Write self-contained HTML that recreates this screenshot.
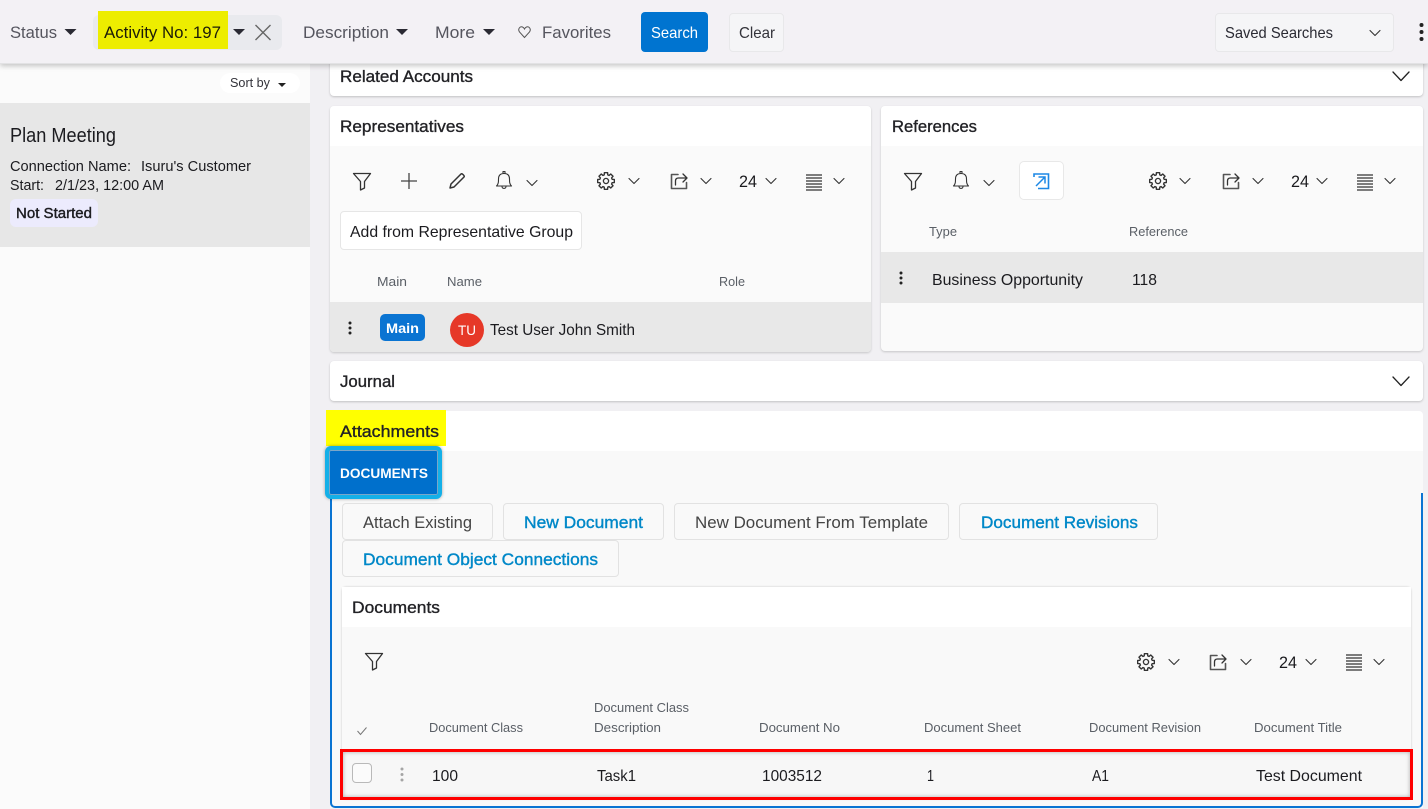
<!DOCTYPE html>
<html lang="en">
<head>
<meta charset="utf-8">
<title>Activity</title>
<style>
html,body{margin:0;padding:0;width:1428px;height:809px;overflow:hidden;background:#f1f0f3;font-family:"Liberation Sans",sans-serif}
.b{position:absolute;box-sizing:border-box}
svg{position:absolute;left:0;top:0}
svg text{font-family:"Liberation Sans",sans-serif;fill:#1b1b1f;font-size:16px}
svg text.hd{font-size:17px;fill:#222226;stroke:#222226;stroke-width:.35px}
svg text.th{font-size:13px;fill:#5a5f66}
svg text.tb{font-size:17px;fill:#55555e}
svg text.ln{fill:#0088c8;stroke:#0088c8;stroke-width:.4px;font-size:17px}
.i{fill:none;stroke:#333;stroke-width:1.3;stroke-linejoin:round;stroke-linecap:round}
</style>
</head>
<body>
<!-- left panel -->
<div class="b" style="left:0;top:64px;width:310px;height:745px;background:#fbfbfb"></div>
<div class="b" style="left:0;top:103px;width:310px;height:144px;background:#e7e7e7"></div>
<div class="b" style="left:220px;top:73px;width:80px;height:20px;background:#fff;border-radius:10px"></div>
<div class="b" style="left:10px;top:199px;width:88px;height:28px;background:#ecebfd;border-radius:6px"></div>

<!-- related accounts -->
<div class="b" style="left:330px;top:56px;width:1093px;height:40px;background:#fff;border-radius:4px;box-shadow:0 1px 2px rgba(0,0,0,.2)"></div>

<!-- representatives -->
<div class="b" style="left:330px;top:106px;width:541px;height:246px;background:#fafafa;border-radius:4px;box-shadow:0 1px 2px rgba(0,0,0,.18);overflow:hidden">
  <div class="b" style="left:0;top:0;width:541px;height:40px;background:#fff"></div>
  <div class="b" style="left:0;top:196px;width:541px;height:50px;background:#e8e8e8"></div>
</div>
<div class="b" style="left:340px;top:211px;width:242px;height:39px;background:#fff;border:1px solid #e6e6e6;border-radius:4px"></div>
<div class="b" style="left:380px;top:314px;width:45px;height:27px;background:#0a74d2;border-radius:5px"></div>
<div class="b" style="left:450px;top:313px;width:34px;height:34px;background:#e63828;border-radius:50%"></div>

<!-- references -->
<div class="b" style="left:881px;top:106px;width:542px;height:245px;background:#fafafa;border-radius:4px;box-shadow:0 1px 2px rgba(0,0,0,.18);overflow:hidden">
  <div class="b" style="left:0;top:0;width:542px;height:40px;background:#fff"></div>
  <div class="b" style="left:0;top:146px;width:542px;height:51px;background:#e8e8e8"></div>
</div>
<div class="b" style="left:1019px;top:161px;width:45px;height:39px;background:#fff;border:1px solid #e8e8e8;border-radius:5px"></div>

<!-- journal -->
<div class="b" style="left:330px;top:361px;width:1093px;height:40px;background:#fff;border-radius:4px;box-shadow:0 1px 2px rgba(0,0,0,.2)"></div>

<!-- attachments -->
<div class="b" style="left:330px;top:411px;width:1093px;height:40px;background:#fff;border-radius:4px 4px 0 0"></div>
<div class="b" style="left:330px;top:451px;width:1093px;height:357px;background:#f9f9f9"></div>
<div class="b" style="left:330px;top:493px;width:1093px;height:315px;border:2px solid #0a74d2;border-top:0;border-radius:0 0 5px 5px"></div>
<div class="b" style="left:326px;top:410px;width:120px;height:36px;background:#ff0"></div>
<div class="b" style="left:325px;top:446px;width:117px;height:53px;background:#0070cc;border:4px solid #14b0e8;border-radius:6px;box-shadow:inset 0 0 0 1px #7aa6c8,0 0 3px rgba(0,0,0,.35)"></div>

<div class="b" style="left:342px;top:503px;width:151px;height:37px;background:#f9f9f9;border:1px solid #e2e2e2;border-radius:4px"></div>
<div class="b" style="left:503px;top:503px;width:161px;height:37px;background:#f9f9f9;border:1px solid #e2e2e2;border-radius:4px"></div>
<div class="b" style="left:674px;top:503px;width:275px;height:37px;background:#f9f9f9;border:1px solid #e2e2e2;border-radius:4px"></div>
<div class="b" style="left:959px;top:503px;width:199px;height:37px;background:#f9f9f9;border:1px solid #e2e2e2;border-radius:4px"></div>
<div class="b" style="left:342px;top:540px;width:277px;height:37px;background:#f9f9f9;border:1px solid #e2e2e2;border-radius:4px"></div>

<!-- documents card -->
<div class="b" style="left:342px;top:587px;width:1069px;height:212px;background:#f9f9f9;border-radius:4px;box-shadow:0 0 2px rgba(0,0,0,.2)">
  <div class="b" style="left:0;top:0;width:1069px;height:40px;background:#fff"></div>
</div>
<div class="b" style="left:340px;top:749px;width:1073px;height:51px;background:#f7f7f7;border:3px solid #f00;box-shadow:inset 0 0 4px rgba(0,0,0,.3)"></div>
<div class="b" style="left:352px;top:763px;width:20px;height:20px;background:#fbfbfb;border:1px solid #b9b9b9;border-radius:4px"></div>

<!-- top bar -->
<div class="b" style="left:0;top:0;width:1428px;height:64px;background:#f3f1f5;border-bottom:1px solid #e2e2e4;box-shadow:0 2px 5px rgba(0,0,0,.22)"></div>
<div class="b" style="left:93px;top:15px;width:189px;height:35px;background:#e9eaee;border-radius:6px"></div>
<div class="b" style="left:98px;top:11px;width:130px;height:38px;background:#eded00"></div>
<div class="b" style="left:641px;top:12px;width:67px;height:40px;background:#0074d0;border-radius:4px"></div>
<div class="b" style="left:729px;top:13px;width:55px;height:39px;background:#f5f5f7;border:1px solid #e8e8ea;border-radius:4px"></div>
<div class="b" style="left:1215px;top:13px;width:179px;height:39px;background:#f5f5f7;border:1px solid #e8e8ea;border-radius:4px"></div>

<svg width="1428" height="809" viewBox="0 0 1428 809">
<defs>
<symbol id="f" overflow="visible"><path class="i" d="M-8.5,-7.5 H8.5 L2.5,0.5 V7 L-1.5,9 V0.5 Z"/></symbol>
<symbol id="bell" overflow="visible"><path class="i" d="M-7.5,6 C-5.500,4 -5.500,2 -5.500,-1 C-5.500,-4.500 -3.500,-6.500 0,-6.500 C3.500,-6.500 5.500,-4.500 5.500,-1 C5.500,2 5.500,4 7.500,6 Z M-1,-6.500 V-8.500 H1 V-6.500 M-2,6.500 C-2,9 2,9 2,6.500" style="stroke-width:1.1"/></symbol>
<symbol id="gear" overflow="visible"><path class="i" transform="scale(1.06)" d="M7.85,-1.53 L7.85,1.53 L5.77,1.65 L5.25,2.91 L6.63,4.47 L4.47,6.63 L2.91,5.25 L1.65,5.77 L1.53,7.85 L-1.53,7.85 L-1.65,5.77 L-2.91,5.25 L-4.47,6.63 L-6.63,4.47 L-5.25,2.91 L-5.77,1.65 L-7.85,1.53 L-7.85,-1.53 L-5.77,-1.65 L-5.25,-2.91 L-6.63,-4.47 L-4.47,-6.63 L-2.91,-5.25 L-1.65,-5.77 L-1.53,-7.85 L1.53,-7.85 L1.65,-5.77 L2.91,-5.25 L4.47,-6.63 L6.63,-4.47 L5.25,-2.91 L5.77,-1.65 Z"/><circle class="i" r="2.6"/></symbol>
<symbol id="exp" overflow="visible"><path class="i" d="M-1,-6.5 H-7.5 V7.5 H7.5 V1.5" style="stroke:#555;stroke-width:1.6"/><path class="i" d="M-3.5,4 V0 Q-3.5,-3 -0.5,-3 H7.5 M4,-7 L8,-3 L4,1"/></symbol>
<symbol id="ln" overflow="visible"><path d="M-8,-7 H8 M-8,-4 H8 M-8,-1 H8 M-8,2 H8 M-8,5 H8 M-8,8 H8" fill="none" stroke="#333" stroke-width="1.2"/></symbol>
<symbol id="c" overflow="visible"><path class="i" d="M-5,-2.5 L0,2.5 L5,-2.5" style="stroke-width:1.1"/></symbol>
<symbol id="t" overflow="visible"><path d="M-6,-3 H6 L0,3 Z" fill="#2a2a33"/></symbol>
<symbol id="k" overflow="visible"><circle cy="-5" r="1.5" fill="#222"/><circle cy="0" r="1.5" fill="#222"/><circle cy="5" r="1.5" fill="#222"/></symbol>
</defs>

<!-- top bar -->
<text class="tb" x="10" y="38" textLength="47" lengthAdjust="spacingAndGlyphs">Status</text>
<use href="#t" x="70.5" y="32"/>
<text x="104" y="38" textLength="117" lengthAdjust="spacingAndGlyphs" style="font-size:17px;fill:#1c1c08">Activity No: 197</text>
<use href="#t" x="239" y="32"/>
<path d="M255.5,25 L270.5,40 M270.5,25 L255.5,40" fill="none" stroke="#666" stroke-width="1.4"/>
<text class="tb" x="303" y="38" textLength="86" lengthAdjust="spacingAndGlyphs">Description</text>
<use href="#t" x="402" y="32"/>
<text class="tb" x="435" y="38" textLength="40" lengthAdjust="spacingAndGlyphs">More</text>
<use href="#t" x="489" y="32"/>
<path d="M524.5,37.5 L519.5,32 C517.5,29 520,26 522.5,27 C523.5,27.4 524,28 524.5,29 C525,28 525.5,27.4 526.5,27 C529,26 531.5,29 529.5,32 Z" fill="none" stroke="#555" stroke-width="1"/>
<text class="tb" x="542" y="38" textLength="69" lengthAdjust="spacingAndGlyphs">Favorites</text>
<text x="651" y="38" textLength="47" lengthAdjust="spacingAndGlyphs" style="fill:#fff">Search</text>
<text x="739" y="38" textLength="36" lengthAdjust="spacingAndGlyphs" style="fill:#33333a">Clear</text>
<text x="1225" y="38" textLength="108" lengthAdjust="spacingAndGlyphs" style="fill:#2a2a33">Saved Searches</text>
<use href="#c" x="1375" y="33"/>
<circle cx="1421.5" cy="25" r="2" fill="#222"/><circle cx="1421.5" cy="32" r="2" fill="#222"/><circle cx="1421.5" cy="39" r="2" fill="#222"/>

<!-- left panel -->
<text x="230" y="87" textLength="40" lengthAdjust="spacingAndGlyphs" style="font-size:13px;fill:#33333a">Sort by</text>
<path d="M278,83 H286 L282,87 Z" fill="#222"/>
<text x="10" y="142" textLength="106" lengthAdjust="spacingAndGlyphs" style="font-size:20px">Plan Meeting</text>
<text x="10" y="171" textLength="121" lengthAdjust="spacingAndGlyphs" style="font-size:15px">Connection Name:</text>
<text x="141" y="171" textLength="110" lengthAdjust="spacingAndGlyphs" style="font-size:15px">Isuru's Customer</text>
<text x="10" y="190" textLength="34" lengthAdjust="spacingAndGlyphs" style="font-size:15px">Start:</text>
<text x="55" y="190" textLength="109" lengthAdjust="spacingAndGlyphs" style="font-size:15px">2/1/23, 12:00 AM</text>
<text x="16" y="218" textLength="76" lengthAdjust="spacingAndGlyphs" style="font-size:15px;stroke:#1b1b1f;stroke-width:.4px">Not Started</text>

<!-- section headers -->
<text class="hd" x="340" y="82" textLength="133" lengthAdjust="spacingAndGlyphs">Related Accounts</text>
<path class="i" d="M1393,72 L1401,80.5 L1409,72" style="stroke:#222"/>
<text class="hd" x="340" y="132" textLength="124" lengthAdjust="spacingAndGlyphs">Representatives</text>
<text class="hd" x="892" y="132" textLength="85" lengthAdjust="spacingAndGlyphs">References</text>
<text class="hd" x="340" y="387" textLength="55" lengthAdjust="spacingAndGlyphs">Journal</text>
<path class="i" d="M1393,377 L1401,385.5 L1409,377" style="stroke:#222"/>
<text class="hd" x="340" y="437" textLength="99" lengthAdjust="spacingAndGlyphs">Attachments</text>

<!-- representatives -->
<use href="#f" x="362" y="181"/>
<path d="M401,181 H417 M409,173 V189" fill="none" stroke="#444" stroke-width="1.3"/>
<path class="i" d="M450,188 L451,184 L461,174 C462,173 465,176 464,177 L454,187 Z" style="stroke-width:1.5"/>
<use href="#bell" x="504" y="180"/><use href="#c" x="532" y="183"/>
<use href="#gear" x="606" y="181"/><use href="#c" x="634" y="181"/>
<use href="#exp" x="679" y="181"/><use href="#c" x="706" y="181"/>
<text x="739" y="187" textLength="18" lengthAdjust="spacingAndGlyphs" style="font-size:17px">24</text><use href="#c" x="771" y="181"/>
<use href="#ln" x="814" y="182"/><use href="#c" x="839" y="181"/>
<text x="350" y="237" textLength="223" lengthAdjust="spacingAndGlyphs">Add from Representative Group</text>
<text class="th" x="377" y="286" textLength="30" lengthAdjust="spacingAndGlyphs">Main</text>
<text class="th" x="447" y="286" textLength="35" lengthAdjust="spacingAndGlyphs">Name</text>
<text class="th" x="719" y="286" textLength="26" lengthAdjust="spacingAndGlyphs">Role</text>
<use href="#k" x="350" y="328"/>
<text x="386" y="333" textLength="33" lengthAdjust="spacingAndGlyphs" style="font-size:14px;font-weight:700;fill:#fff">Main</text>
<text x="458" y="335" textLength="18" lengthAdjust="spacingAndGlyphs" style="font-size:14px;fill:#fff">TU</text>
<text x="490" y="335" textLength="145" lengthAdjust="spacingAndGlyphs">Test User John Smith</text>

<!-- references -->
<use href="#f" x="913" y="181"/>
<use href="#bell" x="961" y="180"/><use href="#c" x="989" y="183"/>
<path d="M1034,177 V174 H1048.5 V188.5 H1038" fill="none" stroke="#1e88e5" stroke-width="1.6"/>
<path d="M1036,186 L1045,177 M1038.5,177 H1045 V183.5" fill="none" stroke="#1e88e5" stroke-width="1.5"/>
<use href="#gear" x="1158" y="181"/><use href="#c" x="1185" y="181"/>
<use href="#exp" x="1231" y="181"/><use href="#c" x="1258" y="181"/>
<text x="1291" y="187" textLength="18" lengthAdjust="spacingAndGlyphs" style="font-size:17px">24</text><use href="#c" x="1322" y="181"/>
<use href="#ln" x="1365" y="182"/><use href="#c" x="1390" y="181"/>
<text class="th" x="929" y="236" textLength="28" lengthAdjust="spacingAndGlyphs">Type</text>
<text class="th" x="1129" y="236" textLength="59" lengthAdjust="spacingAndGlyphs">Reference</text>
<use href="#k" x="901" y="278"/>
<text x="932" y="285" textLength="151" lengthAdjust="spacingAndGlyphs">Business Opportunity</text>
<text x="1132" y="285" textLength="25" lengthAdjust="spacingAndGlyphs">118</text>

<!-- attachments -->
<text x="340" y="478" textLength="88" lengthAdjust="spacingAndGlyphs" style="font-size:14px;font-weight:700;fill:#fff">DOCUMENTS</text>
<text x="363" y="528" textLength="109" lengthAdjust="spacingAndGlyphs" style="font-size:17px;fill:#444">Attach Existing</text>
<text class="ln" x="524" y="528" textLength="119" lengthAdjust="spacingAndGlyphs">New Document</text>
<text x="695" y="528" textLength="233" lengthAdjust="spacingAndGlyphs" style="font-size:17px;fill:#444">New Document From Template</text>
<text class="ln" x="981" y="528" textLength="157" lengthAdjust="spacingAndGlyphs">Document Revisions</text>
<text class="ln" x="363" y="565" textLength="235" lengthAdjust="spacingAndGlyphs">Document Object Connections</text>
<text class="hd" x="352" y="613" textLength="88" lengthAdjust="spacingAndGlyphs">Documents</text>
<use href="#f" x="374" y="661"/>
<use href="#gear" x="1146" y="662"/><use href="#c" x="1174" y="662"/>
<use href="#exp" x="1218" y="662"/><use href="#c" x="1246" y="662"/>
<text x="1279" y="668" textLength="18" lengthAdjust="spacingAndGlyphs" style="font-size:17px">24</text><use href="#c" x="1311" y="662"/>
<use href="#ln" x="1354" y="662"/><use href="#c" x="1379" y="662"/>
<path d="M357.500,731 L360.500,734.500 L366.500,727.500" fill="none" stroke="#777" stroke-width="1"/>
<text class="th" x="429" y="732" textLength="94" lengthAdjust="spacingAndGlyphs">Document Class</text>
<text class="th" x="594" y="712" textLength="95" lengthAdjust="spacingAndGlyphs">Document Class</text>
<text class="th" x="594" y="732" textLength="67" lengthAdjust="spacingAndGlyphs">Description</text>
<text class="th" x="759" y="732" textLength="81" lengthAdjust="spacingAndGlyphs">Document No</text>
<text class="th" x="924" y="732" textLength="97" lengthAdjust="spacingAndGlyphs">Document Sheet</text>
<text class="th" x="1089" y="732" textLength="112" lengthAdjust="spacingAndGlyphs">Document Revision</text>
<text class="th" x="1254" y="732" textLength="88" lengthAdjust="spacingAndGlyphs">Document Title</text>
<circle cx="402" cy="769" r="1.500" fill="#a5a5a5"/><circle cx="402" cy="774.500" r="1.500" fill="#a5a5a5"/><circle cx="402" cy="780" r="1.500" fill="#a5a5a5"/>
<text x="432" y="781" textLength="26" lengthAdjust="spacingAndGlyphs">100</text>
<text x="597" y="781" textLength="39" lengthAdjust="spacingAndGlyphs">Task1</text>
<text x="762" y="781" textLength="60" lengthAdjust="spacingAndGlyphs">1003512</text>
<text x="927" y="781" textLength="7" lengthAdjust="spacingAndGlyphs">1</text>
<text x="1092" y="781" textLength="17" lengthAdjust="spacingAndGlyphs">A1</text>
<text x="1256" y="781" textLength="106" lengthAdjust="spacingAndGlyphs">Test Document</text>
</svg>
</body>
</html>
